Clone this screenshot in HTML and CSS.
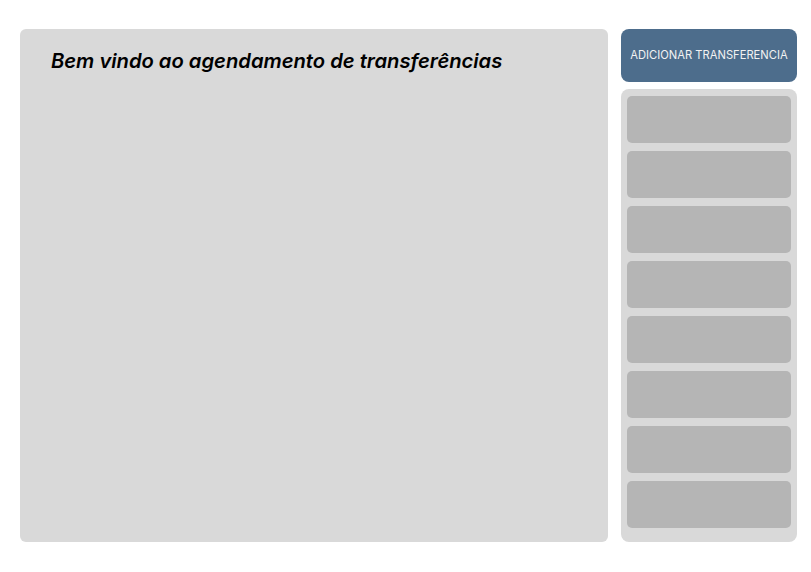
FILE: index.html
```html
<!DOCTYPE html>
<html lang="pt-BR">
<head>
<meta charset="utf-8">
<title>Agendamento de transferências</title>
<link rel="stylesheet" href="styles.css">
</head>
<body>
<div class="layout">
  <main class="main-panel">
    <h1 class="title">Bem vindo ao agendamento de transferências</h1>
  </main>
  <aside class="side">
    <button class="add-btn">ADICIONAR TRANSFERENCIA</button>
    <div class="list">
      <div class="item"></div>
      <div class="item"></div>
      <div class="item"></div>
      <div class="item"></div>
      <div class="item"></div>
      <div class="item"></div>
      <div class="item"></div>
      <div class="item"></div>
    </div>
  </aside>
</div>
</body>
</html>
```
FILE: styles.css
```css
html, body {
  margin: 0;
  padding: 0;
  background: #ffffff;
}
body {
  font-family: Inter, "Noto Sans", sans-serif;
}
.layout {
  display: flex;
  gap: 13px;
  padding: 29px 14px 0 20px;
  height: 513px;
}
.main-panel {
  width: 588px;
  background: #d9d9d9;
  border-radius: 6px;
  padding: 20px 31px;
  box-sizing: border-box;
}
.title {
  margin: 0;
  font-size: 20.2px;
  font-weight: 600;
  font-style: italic;
  line-height: 24px;
  color: #000;
}
.side {
  width: 176px;
  display: flex;
  flex-direction: column;
  gap: 7px;
}
.add-btn {
  height: 53px;
  border: none;
  border-radius: 8px;
  background: #4d6d8c;
  color: #f2f2f2;
  font-family: Inter, "Noto Sans", sans-serif;
  font-size: 11.2px;
  font-weight: 400;
  padding: 0 0 1px;
  flex: none;
}
.list {
  flex: 1;
  background: #d9d9d9;
  border-radius: 8px;
  padding: 7px 6px 14px;
  display: flex;
  flex-direction: column;
  gap: 8px;
}
.item {
  height: 47px;
  background: #b5b5b5;
  border-radius: 5px;
  flex: none;
}
```
